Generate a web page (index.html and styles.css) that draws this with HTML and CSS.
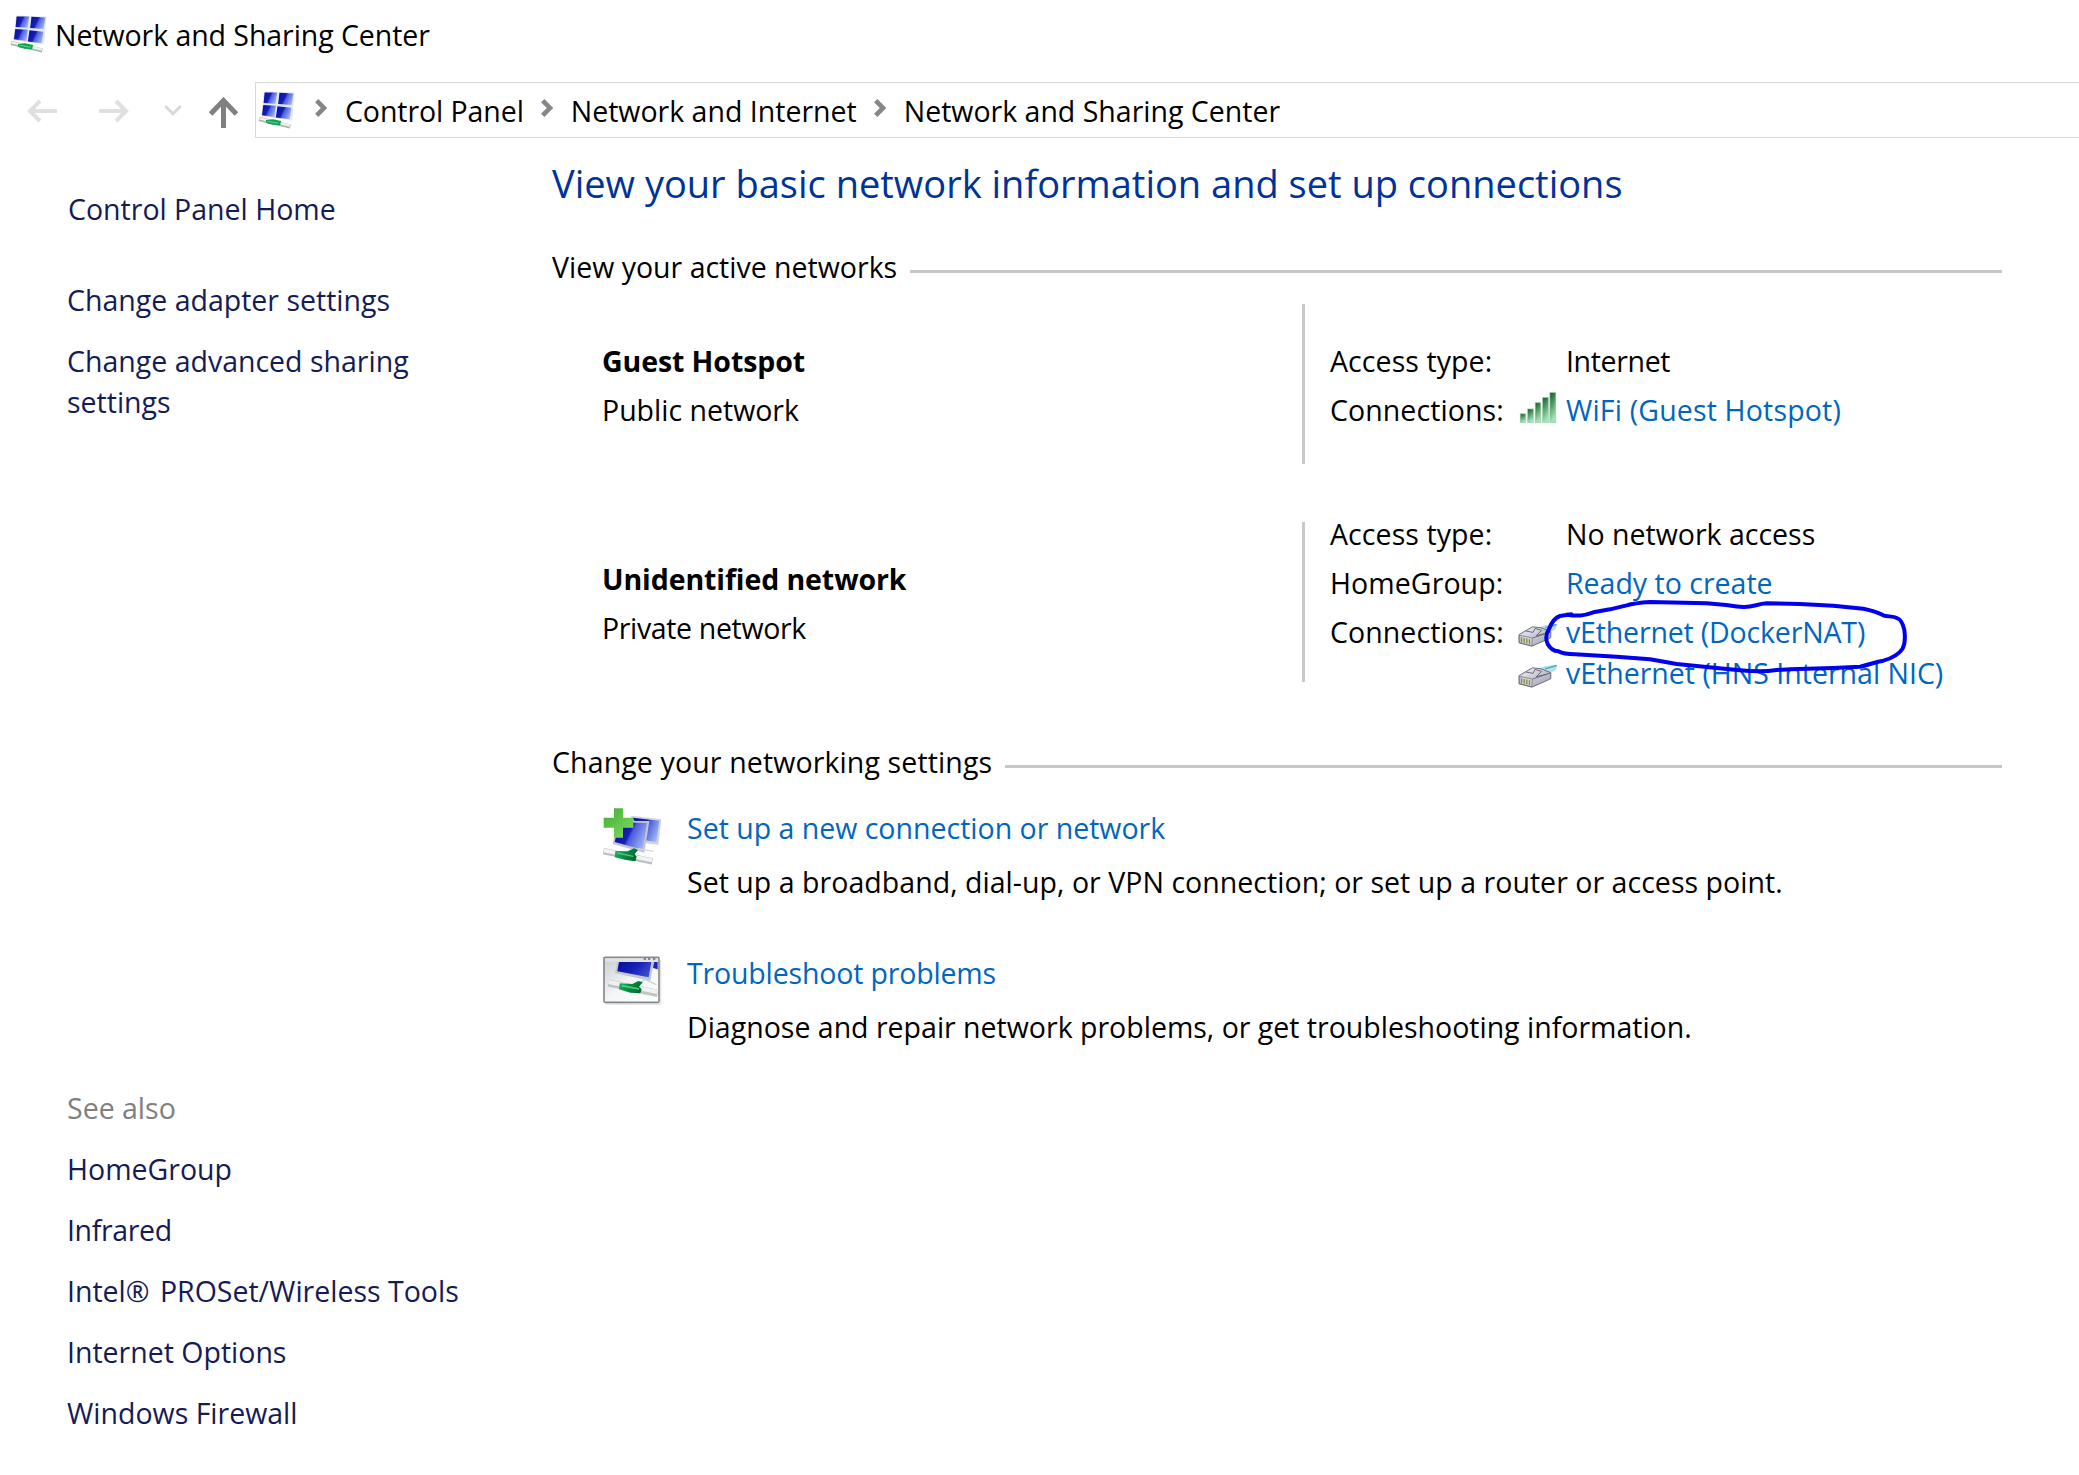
FILE: index.html
```
<!DOCTYPE html>
<html lang="en">
<head>
    <meta charset="UTF-8">
    <meta name="viewport" content="width=device-width, initial-scale=1.0">
    <title>Network and Sharing Center</title>
    <link rel="stylesheet" href="styles.css">
</head>
<body>
    <!-- Shared icons -->
    <svg class="defs" width="0" height="0">
        <defs>
            <linearGradient id="screen" x1="0" y1="0.3" x2="1" y2="0.7">
                <stop offset="0" stop-color="#0a10a0"/>
                <stop offset="0.42" stop-color="#1620b8"/>
                <stop offset="0.5" stop-color="#4a5cd8"/>
                <stop offset="1" stop-color="#a9bdf6"/>
            </linearGradient>
            <linearGradient id="dark-screen" x1="0" y1="0.3" x2="1" y2="0.7">
                <stop offset="0" stop-color="#0a10a0"/>
                <stop offset="0.5" stop-color="#1822b8"/>
                <stop offset="1" stop-color="#3f50d2"/>
            </linearGradient>
            <linearGradient id="plus" x1="0" y1="0" x2="1" y2="1">
                <stop offset="0" stop-color="#3fae2c"/>
                <stop offset="1" stop-color="#86dc6a"/>
            </linearGradient>
            <linearGradient id="bar" x1="0" y1="0" x2="0.3" y2="1">
                <stop offset="0" stop-color="#0f5a26"/>
                <stop offset="1" stop-color="#a4e6b8"/>
            </linearGradient>
            <linearGradient id="sleeve" x1="0" y1="0" x2="1" y2="0.3">
                <stop offset="0" stop-color="#1fb562"/>
                <stop offset="0.5" stop-color="#0b8f45"/>
                <stop offset="1" stop-color="#056b32"/>
            </linearGradient>
            <linearGradient id="plug" x1="0" y1="0" x2="1" y2="1">
                <stop offset="0" stop-color="#f4f4f8"/>
                <stop offset="1" stop-color="#9a9cac"/>
            </linearGradient>
            <linearGradient id="pane" x1="0" y1="0" x2="1" y2="1">
                <stop offset="0" stop-color="#c9ccd0"/>
                <stop offset="0.5" stop-color="#f4f6f7"/>
                <stop offset="1" stop-color="#ffffff"/>
            </linearGradient>
        </defs>
        <symbol id="icon-network" viewBox="30 48 112 114">
            <path d="M48 49L141 52L133 137L40 124Z" fill="#e3e7f0"/>
            <path d="M50 52L88 52L83 86L47 84Z" fill="url(#screen)"/>
            <path d="M95 53L137 55L132 90L91 87Z" fill="url(#screen)"/>
            <path d="M46 90L84 92L80 126L42 121Z" fill="url(#screen)"/>
            <path d="M89 94L131 98L126 133L84 128Z" fill="url(#screen)"/>
            <path d="M33 132L128 155" stroke="#a9b5ae" stroke-width="13"/>
            <path d="M34 130L127 152" stroke="#eef2ef" stroke-width="7"/>
            <path d="M54 135L76 133L100 138L97 151L74 150L55 144Z" fill="#12a350"/>
            <path d="M58 139L92 145" stroke="#5fd68e" stroke-width="3"/>
        </symbol>
        <symbol id="icon-plug" viewBox="52 245 122 75">
            <path d="M112 262L132 254L172 250L166 268L146 276Z" fill="#b5e1ea"/>
            <path d="M134 262L170 252" stroke="#4fa9bd" stroke-width="4"/>
            <path d="M55 283L96 259L122 262L152 274L152 292L140 298L94 318L55 308Z" fill="url(#plug)" stroke="#686a7b" stroke-width="3"/>
            <path d="M76 272L98 276L104 264L124 270L108 286L142 278M97 293L150 275" fill="none" stroke="#686a7b" stroke-width="3"/>
            <path d="M57 285L96 293L94 317L57 307Z" fill="#d2d2d0" stroke="#686a7b" stroke-width="2"/>
            <path d="M63 291V306M71 293V308M79 295V310M87 297V312" stroke="#8c8a48" stroke-width="4"/>
        </symbol>
        <symbol id="icon-chevron" viewBox="0 0 12 18">
            <path d="M1.7 1.7L8.9 9L1.7 16.3" fill="none" stroke="#868686" stroke-width="4.6"/>
        </symbol>
    </svg>

    <header class="titlebar">
        <svg class="network-icon"><use href="#icon-network"/></svg>
        <span>Network and Sharing Center</span>
    </header>

    <div class="toolbar">
        <nav class="history">
            <svg width="30" height="24" viewBox="0 0 30 24"><path d="M30 12H3M13 2L3 12L13 22" fill="none" stroke="#e0e0e0" stroke-width="4"/></svg>
            <svg width="30" height="24" viewBox="0 0 30 24"><path d="M0 12H27M17 2L27 12L17 22" fill="none" stroke="#e0e0e0" stroke-width="4"/></svg>
            <svg width="18" height="24" viewBox="0 0 18 24"><path d="M1.2 7L9 14.8L16.8 7" fill="none" stroke="#d9d9d9" stroke-width="3"/></svg>
            <svg width="29" height="31" viewBox="0 0 29 31"><path d="M14.5 31V4M1.6 17L14.5 3.5L27.4 17" fill="none" stroke="#808080" stroke-width="5"/></svg>
        </nav>
        <div class="address">
            <svg class="network-icon"><use href="#icon-network"/></svg>
            <svg class="chevron"><use href="#icon-chevron"/></svg>
            <span>Control Panel</span>
            <svg class="chevron"><use href="#icon-chevron"/></svg>
            <span>Network and Internet</span>
            <svg class="chevron"><use href="#icon-chevron"/></svg>
            <span>Network and Sharing Center</span>
        </div>
    </div>

    <div class="main">
        <aside class="sidebar">
            <a class="home">Control Panel Home</a>
            <a>Change adapter settings</a>
            <a>Change advanced sharing settings</a>
            <div class="see-also">
                <span>See also</span>
                <a>HomeGroup</a>
                <a class="tighter">Infrared</a>
                <a><i class="reg">Intel®</i> PROSet/Wireless Tools</a>
                <a>Internet Options</a>
                <a>Windows Firewall</a>
            </div>
        </aside>

        <div class="content">
            <h1>View your basic network information and set up connections</h1>

            <h2><span>View your active networks</span></h2>

            <div class="network">
                <div class="network-name">
                    <strong>Guest Hotspot</strong>
                    <span>Public network</span>
                </div>
                <div class="details">
                    <div class="row">
                        <span class="label">Access type:</span>
                        <span class="tighter">Internet</span>
                    </div>
                    <div class="row">
                        <span class="label">Connections:</span>
                        <svg class="signal" viewBox="57 36 115 95">
                            <g fill="url(#bar)" stroke="#8fc79f" stroke-width="2">
                                <rect x="60" y="103" width="17" height="26"/>
                                <rect x="83" y="88" width="17" height="41"/>
                                <rect x="106" y="69" width="17" height="60"/>
                                <rect x="129" y="53" width="17" height="76"/>
                                <rect x="151" y="38" width="18" height="91"/>
                            </g>
                        </svg>
                        <a class="link wide">WiFi (Guest Hotspot)</a>
                    </div>
                </div>
            </div>

            <div class="network unidentified">
                <div class="network-name">
                    <strong>Unidentified network</strong>
                    <span class="tighter">Private network</span>
                </div>
                <div class="details">
                    <div class="row">
                        <span class="label">Access type:</span>
                        <span>No network access</span>
                    </div>
                    <div class="row">
                        <span class="label">HomeGroup:</span>
                        <a class="link">Ready to create</a>
                    </div>
                    <div class="row">
                        <span class="label">Connections:</span>
                        <svg class="plug"><use href="#icon-plug"/></svg>
                        <a class="link tight">vEthernet (DockerNAT)</a>
                        <!-- Pen mark around the Docker adapter -->
                        <svg class="pen-mark" viewBox="0 0 1380 360">
                            <path d="M214 103L180 108C162 114 154 130 148 145C138 160 136 176 143 192C150 205 160 213 175 214C190 222 205 223 225 223L350 230L450 238L530 252L650 264L720 271C760 275 800 275 830 270L870 268L1000 264L1080 260C1110 254 1125 246 1150 242C1175 236 1200 220 1208 205C1216 190 1215 165 1213 150C1210 138 1206 118 1192 115C1178 107 1164 111 1150 106C1130 95 1110 90 1090 86L1000 77L900 72L800 70C770 72 760 82 730 81C700 80 690 76 670 74L620 70L450 66C420 68 400 70 380 76L330 88L280 97C250 108 235 109 200 104"/>
                        </svg>
                    </div>
                    <div class="row">
                        <span class="label"></span>
                        <svg class="plug"><use href="#icon-plug"/></svg>
                        <a class="link">vEthernet (HNS Internal NIC)</a>
                    </div>
                </div>
            </div>

            <h2 class="settings-title"><span>Change your networking settings</span></h2>

            <div class="task">
                <svg width="60" height="62" viewBox="39 54 180 186">
                    <path d="M122 77L214 88L205 164L160 158Z" fill="#cfd2da"/>
                    <path d="M128 83L208 92L199 156L160 150Z" fill="url(#screen)"/>
                    <path d="M82 92L178 93L163 188L68 162Z" fill="#c3c6d0"/>
                    <path d="M88 97L171 99L158 179L74 156Z" fill="url(#screen)"/>
                    <path d="M126 190L146 176L190 184" fill="none" stroke="#d5d8d6" stroke-width="4"/>
                    <path d="M40 183L187 214" stroke="#b7c0bb" stroke-width="19"/>
                    <path d="M41 181L186 211" stroke="#f1f4f2" stroke-width="11"/>
                    <path d="M76 183L112 184L132 175L144 180L134 192L140 200L136 214L108 210L74 202Z" fill="url(#sleeve)"/>
                    <path d="M82 189L130 199" stroke="#4cc883" stroke-width="4"/>
                    <path d="M72 55H99V83H130V113H99V143H72V113H41V83H72Z" fill="url(#plus)"/>
                </svg>
                <div>
                    <a class="link">Set up a new connection or network</a>
                    <p class="setup-text">Set up a broadband, dial-up, or VPN connection; or set up a router or access point.</p>
                </div>
            </div>

            <div class="task">
                <svg class="window-icon" width="60" height="50" viewBox="38 48 180 150">
                    <path d="M46 192H211V60" fill="none" stroke="#e4e4e4" stroke-width="4"/>
                    <rect x="41" y="52" width="165" height="135" rx="3" fill="url(#pane)" stroke="#85898e" stroke-width="5"/>
                    <path d="M44 55H203V65H44Z" fill="#dfe2e5"/>
                    <path d="M160 57H167M173 57H180M188 57H195" stroke="#666b72" stroke-width="4"/>
                    <path d="M80 66H190L180 122L74 100Z" fill="#c3c7d0"/>
                    <path d="M86 66H183L175 112L81 94Z" fill="url(#dark-screen)"/>
                    <path d="M191 66H202V88L188 84Z" fill="#1a24b4"/>
                    <path d="M148 130L164 118L198 134" fill="none" stroke="#d0d3d2" stroke-width="4"/>
                    <path d="M54 129L202 160" stroke="#bfc6c2" stroke-width="22"/>
                    <path d="M55 126L202 156" stroke="#eff2f0" stroke-width="13"/>
                    <path d="M88 130L126 132L144 123L157 127L146 140L154 148L150 160L120 158L86 148Z" fill="url(#sleeve)"/>
                    <path d="M94 137L146 147" stroke="#4cd083" stroke-width="5"/>
                </svg>
                <div>
                    <a class="link tight">Troubleshoot problems</a>
                    <p>Diagnose and repair network problems, or get troubleshooting information.</p>
                </div>
            </div>
        </div>
    </div>
</body>
</html>
```
FILE: styles.css
```
* {
    box-sizing: border-box;
}

body {
    margin: 0;
    font-family: "Open Sans", "Noto Sans", sans-serif;
    font-size: 28.5px;
    line-height: 41px;
    color: #000;
    background-color: #fff;
}

svg {
    display: block;
    flex-shrink: 0;
}

.defs {
    position: absolute;
}

h1,
h2,
p {
    margin: 0;
    font-weight: normal;
}

/* Small spacing corrections for single labels */
.tight {
    letter-spacing: -0.16px;
}

.tighter {
    letter-spacing: -0.35px;
}

.wide {
    letter-spacing: 0.17px;
}

/* Title and address bar */
.titlebar {
    display: flex;
    height: 82px;
    padding: 15px 0 0 10px;
    gap: 8px;
    letter-spacing: -0.06px;
}

.network-icon {
    width: 37px;
    height: 38px;
}

.toolbar {
    display: flex;
    height: 56px;
}

.history {
    display: flex;
    align-items: center;
    width: 255px;
    padding: 2px 0 0 27px;
}

.history svg:nth-child(2) {
    margin-left: 42px;
}

.history svg:nth-child(3) {
    margin-left: 35px;
}

.history svg:nth-child(4) {
    margin-left: 27px;
    margin-top: 3px;
}

.address {
    display: flex;
    flex: 1;
    align-items: center;
    border: 1px solid #d9d9d9;
    border-right: none;
    padding-left: 2px;
    white-space: nowrap;
}

.address span {
    padding-top: 3px;
}

.chevron {
    width: 12px;
    height: 18px;
    margin: 0 18px 4px 17px;
}

.network-icon + .chevron {
    margin-left: 20px;
}

.address span:nth-of-type(1) {
    letter-spacing: -0.08px;
}

/* Page */
.main {
    display: flex;
}

.sidebar {
    width: 552px;
    padding: 51px 125px 0 67px;
    color: #151c55;
}

.sidebar a,
.sidebar span {
    display: block;
    margin-bottom: 20px;
}

.sidebar .home {
    margin: 0 0 50px 1px;
}

.see-also {
    margin: 665px -60px 0 0;
}

.see-also span {
    color: #808080;
}

.reg {
    margin-right: 3px;
    font-style: normal;
}

.content {
    flex: 1;
    padding: 19px 77px 0 0;
}

h1 {
    font-size: 38px;
    line-height: 52px;
    color: #003399;
}

h2 {
    display: flex;
    align-items: center;
    gap: 13px;
    margin-top: 38px;
    font-size: 28.5px;
}

h2::after {
    content: "";
    flex: 1;
    height: 3px;
    margin-top: 8px;
    background-color: #c8c8c8;
}

.link {
    color: #0066c0;
}

/* Active networks */
.network {
    display: flex;
    height: 160px;
    margin: 16px 0 0 50px;
}

.network-name {
    display: flex;
    flex-direction: column;
    gap: 8px;
    width: 700px;
    padding-top: 37px;
}

.network-name strong {
    letter-spacing: -0.09px;
}

.network::before {
    content: "";
    order: 1;
    width: 3px;
    background-color: #c8c8c8;
}

.details {
    order: 2;
    display: flex;
    flex-direction: column;
    gap: 8px;
    padding: 37px 0 0 25px;
}

.unidentified {
    height: 180px;
    margin-top: 50px;
}

.unidentified::before {
    margin: 8px 0 12px;
}

.unidentified .network-name {
    padding-top: 45px;
}

.unidentified .details {
    padding-top: 0;
}

.row {
    position: relative;
    display: grid;
    grid-template-columns: 189px 47px auto;
    height: 41px;
    white-space: nowrap;
}

.row:nth-child(4) {
    margin-top: -8px;
}

.row > :last-child,
.row .link {
    grid-column: 3;
}

.label {
    letter-spacing: 0.08px;
}

.signal {
    width: 38px;
    height: 31px;
    margin-top: 2px;
}

.plug {
    width: 40px;
    height: 25px;
    margin: 10px 0 0 -1px;
}

.row > .pen-mark {
    position: absolute;
    grid-column: auto;
    left: 170px;
    top: -32px;
    z-index: 1;
    width: 460px;
    height: 120px;
}

.pen-mark path {
    fill: none;
    stroke: #0000f0;
    stroke-width: 12;
    stroke-linejoin: round;
    stroke-linecap: round;
}

/* Networking settings */
.settings-title {
    margin-top: 48px;
    letter-spacing: 0.13px;
}

.task {
    display: flex;
    gap: 24px;
    margin: 25px 0 50px 51px;
}

.window-icon {
    margin-top: 3px;
}

.task .link {
    display: block;
    margin-bottom: 13px;
}

.task + .task {
    margin-top: 0;
}

.setup-text {
    letter-spacing: 0.04px;
}
```
